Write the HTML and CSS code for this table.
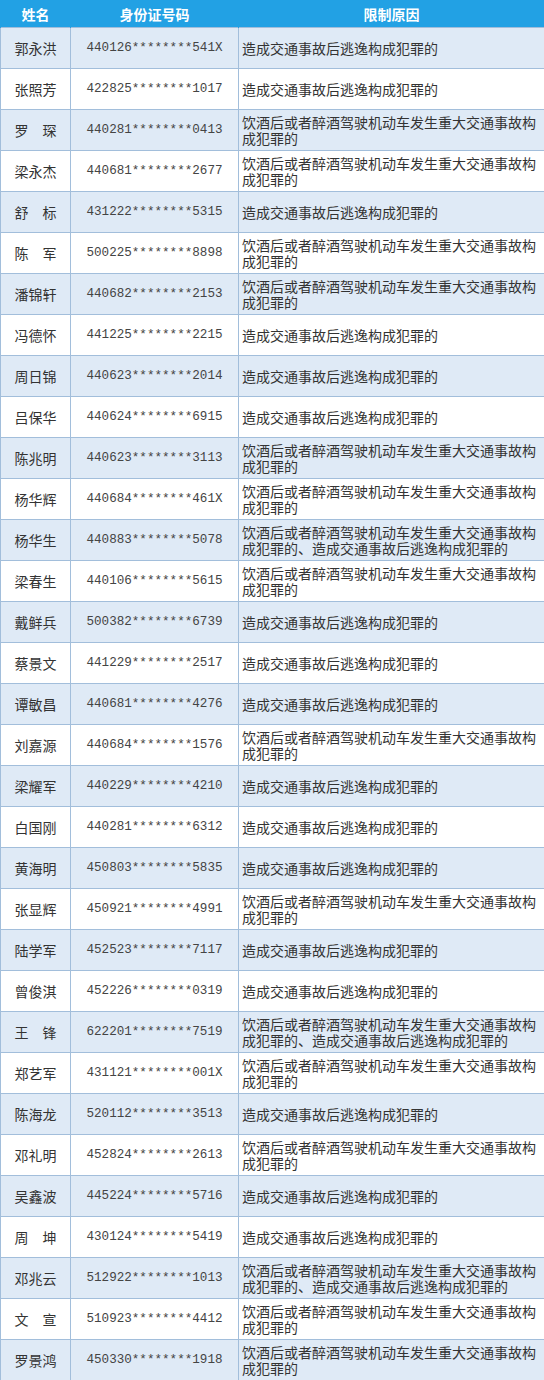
FILE: index.html
```html
<!DOCTYPE html>
<html lang="zh-CN">
<head>
<meta charset="utf-8">
<title>限制名单</title>
<link rel="stylesheet" href="styles.css">
</head>
<body>
<table class="list">
  <colgroup>
    <col class="c-name">
    <col class="c-id">
    <col class="c-reason">
  </colgroup>
  <thead>
    <tr><th>姓名</th><th>身份证号码</th><th>限制原因</th></tr>
  </thead>
  <tbody>
    <tr><td class="name">郭永洪</td><td class="id">440126********541X</td><td class="reason">造成交通事故后逃逸构成犯罪的</td></tr>
    <tr><td class="name">张照芳</td><td class="id">422825********1017</td><td class="reason">造成交通事故后逃逸构成犯罪的</td></tr>
    <tr><td class="name">罗　琛</td><td class="id">440281********0413</td><td class="reason">饮酒后或者醉酒驾驶机动车发生重大交通事故构成犯罪的</td></tr>
    <tr><td class="name">梁永杰</td><td class="id">440681********2677</td><td class="reason">饮酒后或者醉酒驾驶机动车发生重大交通事故构成犯罪的</td></tr>
    <tr><td class="name">舒　标</td><td class="id">431222********5315</td><td class="reason">造成交通事故后逃逸构成犯罪的</td></tr>
    <tr><td class="name">陈　军</td><td class="id">500225********8898</td><td class="reason">饮酒后或者醉酒驾驶机动车发生重大交通事故构成犯罪的</td></tr>
    <tr><td class="name">潘锦轩</td><td class="id">440682********2153</td><td class="reason">饮酒后或者醉酒驾驶机动车发生重大交通事故构成犯罪的</td></tr>
    <tr><td class="name">冯德怀</td><td class="id">441225********2215</td><td class="reason">造成交通事故后逃逸构成犯罪的</td></tr>
    <tr><td class="name">周日锦</td><td class="id">440623********2014</td><td class="reason">造成交通事故后逃逸构成犯罪的</td></tr>
    <tr><td class="name">吕保华</td><td class="id">440624********6915</td><td class="reason">造成交通事故后逃逸构成犯罪的</td></tr>
    <tr><td class="name">陈兆明</td><td class="id">440623********3113</td><td class="reason">饮酒后或者醉酒驾驶机动车发生重大交通事故构成犯罪的</td></tr>
    <tr><td class="name">杨华辉</td><td class="id">440684********461X</td><td class="reason">饮酒后或者醉酒驾驶机动车发生重大交通事故构成犯罪的</td></tr>
    <tr><td class="name">杨华生</td><td class="id">440883********5078</td><td class="reason">饮酒后或者醉酒驾驶机动车发生重大交通事故构成犯罪的、造成交通事故后逃逸构成犯罪的</td></tr>
    <tr><td class="name">梁春生</td><td class="id">440106********5615</td><td class="reason">饮酒后或者醉酒驾驶机动车发生重大交通事故构成犯罪的</td></tr>
    <tr><td class="name">戴鲜兵</td><td class="id">500382********6739</td><td class="reason">造成交通事故后逃逸构成犯罪的</td></tr>
    <tr><td class="name">蔡景文</td><td class="id">441229********2517</td><td class="reason">造成交通事故后逃逸构成犯罪的</td></tr>
    <tr><td class="name">谭敏昌</td><td class="id">440681********4276</td><td class="reason">造成交通事故后逃逸构成犯罪的</td></tr>
    <tr><td class="name">刘嘉源</td><td class="id">440684********1576</td><td class="reason">饮酒后或者醉酒驾驶机动车发生重大交通事故构成犯罪的</td></tr>
    <tr><td class="name">梁耀军</td><td class="id">440229********4210</td><td class="reason">造成交通事故后逃逸构成犯罪的</td></tr>
    <tr><td class="name">白国刚</td><td class="id">440281********6312</td><td class="reason">造成交通事故后逃逸构成犯罪的</td></tr>
    <tr><td class="name">黄海明</td><td class="id">450803********5835</td><td class="reason">造成交通事故后逃逸构成犯罪的</td></tr>
    <tr><td class="name">张显辉</td><td class="id">450921********4991</td><td class="reason">饮酒后或者醉酒驾驶机动车发生重大交通事故构成犯罪的</td></tr>
    <tr><td class="name">陆学军</td><td class="id">452523********7117</td><td class="reason">造成交通事故后逃逸构成犯罪的</td></tr>
    <tr><td class="name">曾俊淇</td><td class="id">452226********0319</td><td class="reason">造成交通事故后逃逸构成犯罪的</td></tr>
    <tr><td class="name">王　锋</td><td class="id">622201********7519</td><td class="reason">饮酒后或者醉酒驾驶机动车发生重大交通事故构成犯罪的、造成交通事故后逃逸构成犯罪的</td></tr>
    <tr><td class="name">郑艺军</td><td class="id">431121********001X</td><td class="reason">饮酒后或者醉酒驾驶机动车发生重大交通事故构成犯罪的</td></tr>
    <tr><td class="name">陈海龙</td><td class="id">520112********3513</td><td class="reason">造成交通事故后逃逸构成犯罪的</td></tr>
    <tr><td class="name">邓礼明</td><td class="id">452824********2613</td><td class="reason">饮酒后或者醉酒驾驶机动车发生重大交通事故构成犯罪的</td></tr>
    <tr><td class="name">吴鑫波</td><td class="id">445224********5716</td><td class="reason">造成交通事故后逃逸构成犯罪的</td></tr>
    <tr><td class="name">周　坤</td><td class="id">430124********5419</td><td class="reason">造成交通事故后逃逸构成犯罪的</td></tr>
    <tr><td class="name">邓兆云</td><td class="id">512922********1013</td><td class="reason">饮酒后或者醉酒驾驶机动车发生重大交通事故构成犯罪的、造成交通事故后逃逸构成犯罪的</td></tr>
    <tr><td class="name">文　宣</td><td class="id">510923********4412</td><td class="reason">饮酒后或者醉酒驾驶机动车发生重大交通事故构成犯罪的</td></tr>
    <tr><td class="name">罗景鸿</td><td class="id">450330********1918</td><td class="reason">饮酒后或者醉酒驾驶机动车发生重大交通事故构成犯罪的</td></tr>
  </tbody>
</table>
</body>
</html>
```

FILE: styles.css
```css
html, body {
  margin: 0;
  padding: 0;
  background: #ffffff;
}

.list {
  width: 544px;
  table-layout: fixed;
  border-collapse: collapse;
  font-family: "Noto Sans CJK SC", "Noto Sans", sans-serif;
  font-size: 14px;
  color: #333333;
}

.c-name { width: 70px; }
.c-id { width: 168px; }
.c-reason { width: 306px; }

.list th {
  height: 27px;
  padding: 0;
  background: #22a1e4;
  color: #ffffff;
  font-weight: bold;
  font-size: 14px;
  line-height: 16px;
  text-align: center;
  border-left: 1px solid #22a1e4;
  border-right: 1px solid #22a1e4;
}

.list td {
  height: 40px;
  padding: 0 3px;
  border: 1px solid #a2bedb;
  line-height: 16px;
  vertical-align: middle;
}

.list tbody tr:nth-child(odd) td {
  background: #dfeaf6;
}

.list tbody tr:nth-child(even) td {
  background: #ffffff;
}

.name {
  text-align: center;
  white-space: nowrap;
}

.id {
  text-align: center;
  font-family: "Liberation Mono", "DejaVu Sans Mono", monospace;
  font-size: 12.6px;
  color: #444444;
}

.reason {
  text-align: left;
}
```
